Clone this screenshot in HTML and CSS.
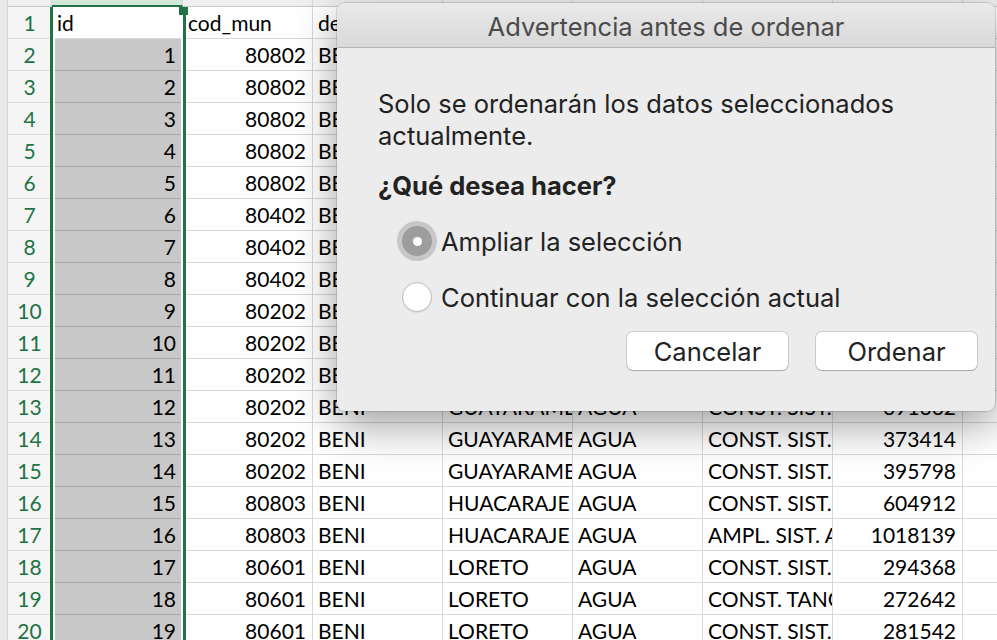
FILE: index.html
```html
<!DOCTYPE html>
<html lang="es">
<head>
    <meta charset="UTF-8">
    <title>Advertencia antes de ordenar</title>
    <link rel="stylesheet" href="styles.css">
</head>
<body>
    <div class="window">
        <div class="sheet">
            <div class="gutter"></div>
            <div class="grid">
                <div class="row col-head">
                    <div class="cell"></div>
                    <div class="cell active-col"></div>
                    <div class="cell"></div>
                    <div class="cell"></div>
                    <div class="cell"></div>
                    <div class="cell"></div>
                    <div class="cell"></div>
                    <div class="cell"></div>
                    <div class="cell"></div>
                </div>
                <div id="rows"></div>
            </div>
        </div>

        <!-- selected column A -->
        <div class="selection"><span class="handle"></span></div>

        <!-- sort warning sheet -->
        <div class="dialog">
            <div class="dialog-title">Advertencia antes de ordenar</div>
            <div class="dialog-body">
                <p class="message">Solo se ordenarán los datos seleccionados<br>actualmente.</p>
                <p class="question">¿Qué desea hacer?</p>
                <div class="options">
                    <label class="option">
                        <span class="radio radio-on"></span>
                        Ampliar la selección
                    </label>
                    <label class="option">
                        <span class="radio"></span>
                        Continuar con la selección actual
                    </label>
                </div>
                <div class="buttons">
                    <button class="btn">Cancelar</button>
                    <button class="btn">Ordenar</button>
                </div>
            </div>
        </div>
    </div>

    <script>
        // Sheet data: id, cod_mun, departamento, municipio, sector, proyecto, monto
        const data = [
            ['80802', 'BENI', 'SANTA ANA', 'AGUA', 'CONST. SIST. AGUA POTABLE', '512340'],
            ['80802', 'BENI', 'SANTA ANA', 'AGUA', 'CONST. SIST. AGUA POTABLE', '433120'],
            ['80802', 'BENI', 'SANTA ANA', 'AGUA', 'CONST. SIST. AGUA POTABLE', '298774'],
            ['80802', 'BENI', 'SANTA ANA', 'AGUA', 'AMPL. SIST. AGUA POTABLE', '874211'],
            ['80802', 'BENI', 'SANTA ANA', 'AGUA', 'CONST. SIST. AGUA POTABLE', '356002'],
            ['80402', 'BENI', 'SAN JAVIER', 'AGUA', 'CONST. SIST. AGUA POTABLE', '402918'],
            ['80402', 'BENI', 'SAN JAVIER', 'AGUA', 'CONST. TANQUE ELEVADO', '265410'],
            ['80402', 'BENI', 'SAN JAVIER', 'AGUA', 'CONST. SIST. AGUA POTABLE', '318455'],
            ['80202', 'BENI', 'GUAYARAMERIN', 'AGUA', 'CONST. SIST. AGUA POTABLE', '447306'],
            ['80202', 'BENI', 'GUAYARAMERIN', 'AGUA', 'CONST. SIST. AGUA POTABLE', '389127'],
            ['80202', 'BENI', 'GUAYARAMERIN', 'AGUA', 'CONST. SIST. AGUA POTABLE', '420550'],
            ['80202', 'BENI', 'GUAYARAMERIN', 'AGUA', 'CONST. SIST. AGUA POTABLE', '691662'],
            ['80202', 'BENI', 'GUAYARAMERIN', 'AGUA', 'CONST. SIST. AGUA POTABLE', '373414'],
            ['80202', 'BENI', 'GUAYARAMERIN', 'AGUA', 'CONST. SIST. AGUA POTABLE', '395798'],
            ['80803', 'BENI', 'HUACARAJE', 'AGUA', 'CONST. SIST. AGUA POTABLE', '604912'],
            ['80803', 'BENI', 'HUACARAJE', 'AGUA', 'AMPL. SIST. AGUA POTABLE', '1018139'],
            ['80601', 'BENI', 'LORETO', 'AGUA', 'CONST. SIST. AGUA POTABLE', '294368'],
            ['80601', 'BENI', 'LORETO', 'AGUA', 'CONST. TANQUE ELEVADO', '272642'],
            ['80601', 'BENI', 'LORETO', 'AGUA', 'CONST. SIST. AGUA POTABLE', '281542']
        ];

        const rows = document.getElementById('rows');

        function addRow(num, cells) {
            const row = document.createElement('div');
            row.className = 'row';
            row.innerHTML = `<div class="cell rh">${num}</div>` + cells.join('');
            rows.appendChild(row);
        }

        addRow(1, [
            '<div class="cell">id</div>',
            '<div class="cell">cod_mun</div>',
            '<div class="cell">departamento</div>',
            '<div class="cell">municipio</div>',
            '<div class="cell">sector</div>',
            '<div class="cell">proyecto</div>',
            '<div class="cell">monto</div>',
            '<div class="cell"></div>'
        ]);

        data.forEach((d, i) => {
            addRow(i + 2, [
                `<div class="cell num sel">${i + 1}</div>`,
                `<div class="cell num">${d[0]}</div>`,
                `<div class="cell">${d[1]}</div>`,
                `<div class="cell">${d[2]}</div>`,
                `<div class="cell">${d[3]}</div>`,
                `<div class="cell">${d[4]}</div>`,
                `<div class="cell num">${d[5]}</div>`,
                '<div class="cell"></div>'
            ]);
        });
    </script>
</body>
</html>
```

FILE: styles.css
```css
body {
    margin: 0;
    background-color: #ffffff;
}

.window {
    position: relative;
    width: 997px;
    height: 640px;
    overflow: hidden;
    font-family: Lato, "Open Sans", sans-serif;
    font-size: 21px;
    color: #000;
}

.sheet {
    display: flex;
}

.gutter {
    flex: 0 0 8px;
    background-color: #e9e9e9;
    border-right: 1px solid #d6d6d6;
    box-sizing: border-box;
}

.grid {
    flex: 1;
}

.row {
    display: grid;
    grid-template-columns: 44px 131px repeat(7, 130px);
    height: 32px;
}

.cell {
    box-sizing: border-box;
    border-right: 1px solid #d8d8d8;
    border-bottom: 1px solid #d8d8d8;
    padding-left: 5px;
    line-height: 32px;
    white-space: nowrap;
    overflow: hidden;
}

.num {
    text-align: right;
    padding-right: 6px;
}

.rh {
    background-color: #f5f5f5;
    color: #217346;
    text-align: center;
    padding-left: 0;
    border-right-color: #cfcfcf;
    border-bottom-color: #dedede;
}

.sel {
    background-color: #c8c8c8;
    border-bottom-color: #a9a9a9;
}

.col-head {
    height: 7px;
}

.col-head .cell {
    background-color: #efefef;
    border-bottom-color: #c9c9c9;
}

.col-head .active-col {
    background-color: #d3e7d9;
    border-bottom: 2px solid #217346;
}

.selection {
    position: absolute;
    left: 50px;
    top: 7px;
    width: 136px;
    bottom: -10px;
    box-sizing: border-box;
    border: 3px solid #217346;
    border-top: none;
    box-shadow: inset 0 0 0 2px #ffffff;
}

.handle {
    position: absolute;
    right: -5px;
    top: 0;
    width: 9px;
    height: 8px;
    background-color: #217346;
}

/* dialog */

.dialog {
    position: absolute;
    left: 337px;
    top: 3px;
    width: 658px;
    height: 408px;
    border-radius: 8px;
    background-color: #ececec;
    box-shadow: 0 0 0 1px rgba(0,0,0,0.12), 0 14px 44px rgba(0,0,0,0.38);
    overflow: hidden;
    font-family: Inter, Roboto, sans-serif;
    font-size: 25.5px;
    color: #222;
}

.dialog-title {
    height: 44px;
    line-height: 47px;
    text-align: center;
    color: #4b4b4b;
    background: linear-gradient(#e9e9e9, #d9d9d9);
    border-bottom: 1px solid #b4b4b4;
}

.dialog-body {
    padding: 40px 18px 0 41px;
}

.message {
    margin: 0;
    line-height: 32px;
}

.question {
    margin: 18px 0 0;
    line-height: 32px;
    font-weight: bold;
}

.options {
    margin: 19px 0 0 24px;
    display: flex;
    flex-direction: column;
    gap: 16px;
}

.option {
    display: flex;
    align-items: center;
    gap: 9px;
    height: 40px;
}

.radio {
    width: 30px;
    height: 30px;
    box-sizing: border-box;
    border-radius: 50%;
    background-color: #fff;
    border: 1px solid #bcbcbc;
    box-shadow: 0 1px 1px rgba(0,0,0,0.08);
}

.radio-on {
    background-color: #9d9d9d;
    border: none;
    box-shadow: 0 0 0 5px #c7c7c7;
    display: flex;
    align-items: center;
    justify-content: center;
}

.radio-on::after {
    content: "";
    width: 9px;
    height: 9px;
    border-radius: 50%;
    background-color: #fff;
}

.buttons {
    margin-top: 15px;
    display: flex;
    justify-content: flex-end;
    gap: 28px;
}

.btn {
    width: 161px;
    height: 38px;
    border: none;
    border-radius: 6px;
    background-color: #fff;
    box-shadow: 0 0 0 1px rgba(0,0,0,0.13), 0 1px 1px rgba(0,0,0,0.18);
    font-family: Inter, Roboto, sans-serif;
    font-size: 25.5px;
    color: #222;
    padding: 0;
}
```
